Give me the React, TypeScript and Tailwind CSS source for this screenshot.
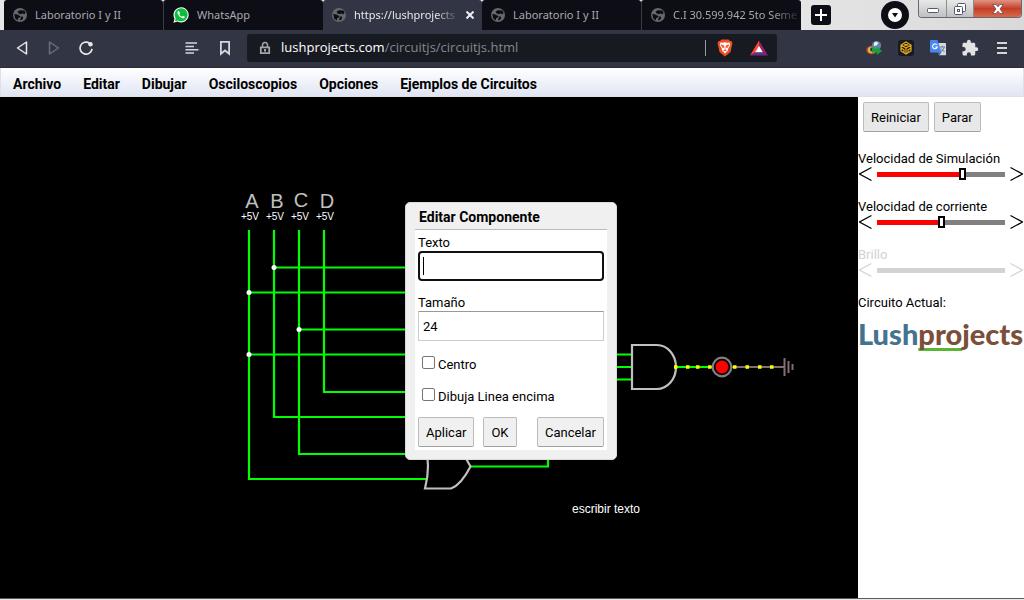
import { useState, type ReactNode } from "react";

const tabs = [
  { title: "Laboratorio I y II", kind: "globe" },
  { title: "WhatsApp", kind: "whatsapp" },
  { title: "https://lushprojects", kind: "globe", active: true },
  { title: "Laboratorio I y II", kind: "globe" },
  { title: "C.I 30.599.942 5to Seme", kind: "globe", faded: true },
];

const menus = ["Archivo", "Editar", "Dibujar", "Osciloscopios", "Opciones", "Ejemplos de Circuitos"];

function Globe() {
  return (
    <svg viewBox="0 0 14 14" className="size-3.5 shrink-0" aria-hidden="true">
      <circle cx="7" cy="7" r="7" fill="#67686d" />
      <path d="M7 2.2 11.6 2.6 12.6 5 11 6.4 9.6 5.2 8.2 6.2 5.6 5.4 4.6 3.6ZM1.2 6 4.4 6.6 7.6 8.2 6.8 9.6 5.2 10 4.8 12.6 2.2 10.6Z" fill="#0c0d15" />
      <path d="M8 8.6 10.2 8.8 9.6 11.4 7 12.4Z" fill="#0c0d15" />
    </svg>
  );
}

function WhatsApp() {
  return (
    <svg viewBox="0 0 16 16" className="size-4 shrink-0" aria-hidden="true">
      <path d="M.4 15.7 1.5 11.7A7.6 7.6 0 1 1 4.5 14.6Z" fill="#fff" />
      <path d="M1.9 14.2 2.7 11.4A6.5 6.5 0 1 1 4.8 13.4Z" fill="#0bbf3d" />
      <path d="M5.4 4.1c-.9.5-1.2 1.5-.8 2.5.9 2.3 2.7 4 5 4.7 1.1.3 2.2-.4 2.2-1.6l-1.9-1-.9 1c-1.2-.5-2.2-1.4-2.700-2.500l.7-.9-.8-2Z" fill="#fff" />
    </svg>
  );
}

function IconButton({ label, children, className = "" }: { label: string; children: ReactNode; className?: string }) {
  return (
    <button type="button" aria-label={label} className={`flex size-4 shrink-0 items-center justify-center ${className}`}>
      {children}
    </button>
  );
}

function TabStrip() {
  return (
    <div className="flex h-[30px] shrink-0 bg-linear-to-r from-[#e6e7e9] via-[#f4f4f4] to-[#d9d9da] pl-1">
      <div className="flex min-w-0 flex-[0_1_797px]" role="tablist">
        {tabs.map((t, i) => (
          <div
            key={i}
            className={`flex min-w-0 flex-1 items-center rounded-t-[3px] pl-[9px] ${
              t.active ? "bg-[#323544] text-[#e6e6e9]" : "bg-[#0c0d15] text-[#a9a9ae]"
            } ${i === 1 || i === 4 ? "border-l border-[#3c3d42]" : ""}`}
          >
            {t.kind === "globe" ? <Globe /> : <WhatsApp />}
            <button
              type="button"
              role="tab"
              aria-selected={!!t.active}
              className={`ml-2 text-left font-['Noto_Sans',sans-serif] text-[11px] leading-4 whitespace-nowrap ${
                t.active ? "mr-2.5 flex-1" : ""
              } ${t.active || t.faded ? "[mask-image:linear-gradient(to_right,black_80%,rgba(0,0,0,0.15))]" : ""}`}
            >
              {t.title}
            </button>
            {t.active && (
              <button type="button" aria-label="Cerrar" className="mr-2 shrink-0">
                <svg viewBox="0 0 8 8" className="size-2" stroke="#f0f0f2" strokeWidth="2" aria-hidden="true">
                  <path d="M.5.5 7.5 7.5M7.5.5.5 7.5" />
                </svg>
              </button>
            )}
          </div>
        ))}
      </div>
      <button type="button" aria-label="Nueva pestaña" className="mt-[5px] ml-2.5 flex size-5 shrink-0 items-center justify-center rounded-[3px] bg-[#0c0d15]">
        <svg viewBox="0 0 12 12" className="size-3" stroke="#fff" strokeWidth="2" aria-hidden="true">
          <path d="M6 0V12M0 6H12" />
        </svg>
      </button>
      <div className="flex-1" />
      <button type="button" aria-label="Buscar pestañas" className="mt-px mr-[9px] flex size-7 shrink-0 items-center justify-center rounded-full bg-[#0c0d15]">
        <svg viewBox="0 0 14 14" className="size-3.5" aria-hidden="true">
          <circle cx="7" cy="7" r="7" fill="#fff" />
          <path d="M4 5H10L7 9.5Z" fill="#0c0d15" />
        </svg>
      </button>
      <div className="mr-0.5 flex h-[18px] shrink-0 overflow-hidden rounded-b-[4px] border border-t-0 border-[#66686c]">
        <button type="button" aria-label="Minimizar" className="flex w-7 items-center justify-center border-r border-[#8b8d90] bg-linear-to-b from-[#e9e9e9] to-[#bfc0c2] pt-1">
          <svg viewBox="0 0 12 5" className="h-[5px] w-3" aria-hidden="true">
            <rect x=".5" y=".5" width="11" height="4" rx="1" fill="#fff" stroke="#55576a" />
          </svg>
        </button>
        <button type="button" aria-label="Restaurar" className="flex w-[27px] items-center justify-center border-r border-[#8b8d90] bg-linear-to-b from-[#e9e9e9] to-[#bfc0c2]">
          <svg viewBox="0 0 12 12" className="size-3" fill="#fff" stroke="#55576a" aria-hidden="true">
            <rect x="3.5" y=".5" width="8" height="8" rx="1" />
            <rect x=".5" y="3.5" width="8" height="8" rx="1" />
            <rect x="3.5" y="6.5" width="2" height="2" />
          </svg>
        </button>
        <button type="button" aria-label="Cerrar ventana" className="flex w-[47px] items-center justify-center bg-linear-to-b from-[#dd9382] via-[#c63d25] to-[#d66a4c]">
          <svg viewBox="0 0 12 10" className="h-2.5 w-3" aria-hidden="true">
            <path d="M.7.5H4L6 2.8 8 .5H11.3L8 5 11.3 9.5H8L6 7.2 4 9.5H.7L4 5Z" fill="#fff" stroke="#6b4a55" strokeWidth=".8" />
          </svg>
        </button>
      </div>
    </div>
  );
}

function BrowserBar() {
  return (
    <div className="flex h-[38px] shrink-0 items-center border-b border-[#292b37] bg-[#323544] px-3.5 pb-px">
      <IconButton label="Atrás">
        <svg viewBox="0 0 16 16" className="size-4" fill="none" stroke="#e9e9ec" strokeWidth="1.5" strokeLinejoin="round">
          <path d="M12.5 2V14L3.5 8Z" />
        </svg>
      </IconButton>
      <IconButton label="Adelante" className="ml-4">
        <svg viewBox="0 0 16 16" className="size-4" fill="none" stroke="#6c6e79" strokeWidth="1.5" strokeLinejoin="round">
          <path d="M3.5 2V14L12.5 8Z" />
        </svg>
      </IconButton>
      <IconButton label="Recargar" className="ml-4">
        <svg viewBox="0 0 16 16" className="size-4" fill="none" stroke="#e9e9ec" strokeWidth="1.7">
          <path d="M11.5 3.2A6 6 0 1 0 14 8.800" />
          <circle cx="12.500" cy="4.300" r="2.200" fill="#e9e9ec" stroke="none" />
        </svg>
      </IconButton>
      <IconButton label="Lista de lectura" className="ml-[90px]">
        <svg viewBox="0 0 16 16" className="size-4" stroke="#d5d6da" strokeWidth="1.5">
          <path d="M1.5 3H13M1.5 6.5H10M1.5 9.8H14.5M1.5 13H10" />
        </svg>
      </IconButton>
      <IconButton label="Guardar en marcadores" className="ml-[17px]">
        <svg viewBox="0 0 16 16" className="size-4" fill="none" stroke="#d5d6da" strokeWidth="1.8">
          <path d="M3.9 1.9H12.1V13.8L8 10.5 3.9 13.8Z" />
        </svg>
      </IconButton>
      <div className="ml-3.5 flex h-7 min-w-0 flex-[0_1_530px] items-center rounded-[3px] bg-[#181a22] pl-3">
        <svg viewBox="0 0 12 14" className="mr-2.5 h-3.5 w-3 shrink-0" aria-hidden="true">
          <path d="M3.5 6V4.2A2.5 2.8 0 0 1 8.5 4.2V6" fill="none" stroke="#a3a4a8" strokeWidth="1.5" />
          <path d="M1.8 6.3H10.2V12.2H1.8Z" fill="none" stroke="#a3a4a8" strokeWidth="1.8" />
          <rect x="5" y="8" width="2" height="2.6" fill="#a3a4a8" />
        </svg>
        <a href="#circuit" className="min-w-0 flex-1 truncate font-['Open_Sans',sans-serif] text-[13px] text-[#86888e]">
          <span className="text-white">lushprojects.com</span>/circuitjs/circuitjs.html
        </a>
        <span className="h-4 w-px bg-[#9a9ba0]" />
        <button type="button" aria-label="Brave Shields" className="ml-[11px] shrink-0">
          <svg viewBox="0 0 16 18" className="h-[18px] w-4">
            <path d="M4.5.5H11.5L13 2 14.5 1.9 15.5 4.5 15 6 13.5 13 8 17.5 2.5 13 1 6 .5 4.5 1.5 1.9 3 2Z" fill="#f04e23" />
            <path d="M3.5 3.5 6 3.8 8 3.2 10 3.8 12.5 3.5 13.3 6 11.2 9.5 11 11.5 8 14.5 5 11.5 4.8 9.5 2.7 6Z" fill="#fff" />
            <path d="M4 5.8 7 6.8 6.2 9ZM12 5.8 9 6.8 9.8 9ZM8 7.5V10.5M6.3 12 8 10.7 9.7 12" fill="#f04e23" stroke="#f04e23" strokeWidth=".7" />
          </svg>
        </button>
        <button type="button" aria-label="Brave Rewards" className="mr-[9px] ml-[17px] shrink-0">
          <svg viewBox="0 0 18 16" className="h-4 w-[18px]">
            <path d="M9 .5 0 15.5 5.5 12.5 9 6Z" fill="#ff4724" />
            <path d="M9 .5 18 15.5 12.5 12.5 9 6Z" fill="#9e1f63" />
            <path d="M0 15.5H18L12.7 12.3H5.3Z" fill="#662d91" />
            <path d="M9 5.7 12.8 12.3H5.2Z" fill="#fff" />
          </svg>
        </button>
      </div>
      <div className="flex-1" />
      <IconButton label="Gestor de descargas">
        <svg viewBox="0 0 16 16" className="size-4">
          <ellipse cx="5.5" cy="10" rx="5.2" ry="4.200" fill="#c84b32" />
          <ellipse cx="6" cy="10" rx="4" ry="3.300" fill="#d8c72e" />
          <ellipse cx="6.500" cy="9.500" rx="2.500" ry="2.200" fill="#283b53" />
          <circle cx="10.5" cy="5.5" r="4.600" fill="#5f86b0" />
          <path d="M8 3 10 1.5 12.500 3 10.500 5.500 8 6Z" fill="#eef2e4" />
          <path d="M6 8 11 9 11 7 16 11 11 15 10.5 12 6 13Z" fill="#15a238" />
        </svg>
      </IconButton>
      <IconButton label="Billetera" className="ml-4 rounded-[3px] bg-[#181a22]">
        <svg viewBox="0 0 16 16" className="size-4" fill="none" stroke="#e5ac18" strokeWidth="1.2">
          <path d="M8 2 13 5V11L8 14 3 11V5ZM3 5 8 8 13 5M8 8V14M5.5 3.5 10.5 6.5M10.5 3.5 5.5 6.5M3 8 6 9.8V12.5M13 8 10 9.8V12.5" />
        </svg>
      </IconButton>
      <IconButton label="Traductor" className="ml-4">
        <svg viewBox="0 0 16 16" className="size-4">
          <path d="M6 3H15.2Q16 3 16 4V15.2H9Z" fill="#d5d8dd" />
          <path d="M10 7H15M12.5 5.8V7M14.3 7.2Q13.5 10 10.5 12M11 8.5 14.5 12" fill="none" stroke="#68798b" />
          <path d="M0 1Q0 0 1 0H7.5L11.5 12.5H1Q0 12.500 0 11.5Z" fill="#4688f0" />
          <path d="M7 5A2.4 2.4 0 1 0 7.3 7H5.2" fill="none" stroke="#fff" strokeWidth="1.1" />
          <path d="M7.5 12.5H11.5L9 15.5Z" fill="#2f5fbf" />
        </svg>
      </IconButton>
      <IconButton label="Extensiones" className="ml-4">
        <svg viewBox="0 0 24 24" className="size-[18px] shrink-0" fill="#e3e3e6">
          <path d="M20.5 11H19V7c0-1.100-.9-2-2-2h-4V3.5a2.5 2.5 0 0 0-5 0V5H4c-1.100 0-2 .9-2 2v3.8h1.5a2.7 2.7 0 0 1 0 5.4H2V20c0 1.100.9 2 2 2h3.8v-1.5a2.7 2.7 0 0 1 5.4 0V22H17c1.100 0 2-.9 2-2v-4h1.5a2.5 2.5 0 0 0 0-5Z" />
        </svg>
      </IconButton>
      <IconButton label="Menú" className="ml-4">
        <svg viewBox="0 0 16 16" className="size-4" stroke="#d5d6da" strokeWidth="1.8">
          <path d="M3 3H13M3 8H13M3 13H13" />
        </svg>
      </IconButton>
    </div>
  );
}

function Circuit() {
  return (
    <svg width="858" height="501" viewBox="0 97 858 501" className="shrink-0" fill="none" aria-label="Circuito">
      <g stroke="#00ff00" strokeWidth="2.2">
        <path d="M249 230V479H427M274 230V417H425M299 230V454H430M324 230V392H425" />
        <path d="M274 267.5H425M249 292.5H425M299 329.5H425M249 354.5H425" />
        <path d="M470 466.5H548V440M600 354.5H632M600 367H632M600 379.5H632M676 367H712" />
      </g>
      <g fill="#fff">
        <circle cx="274" cy="267.5" r="2.5" />
        <circle cx="249" cy="292.5" r="2.5" />
        <circle cx="299" cy="329.5" r="2.5" />
        <circle cx="249" cy="354.5" r="2.5" />
      </g>
      <g stroke="#c0c0c0" strokeWidth="2.2">
        <path d="M425 444Q431 466 425 488.5H451Q461 485 470.5 466.5Q461 448 451 444Z" />
        <path d="M632 345H657A19 22 0 0 1 657 389H632Z" />
      </g>
      <path d="M732 367H784" stroke="#807070" strokeWidth="2" />
      <path d="M784.5 358V376M788.5 361V373M792.5 364V370" stroke="#807070" strokeWidth="2" />
      <circle cx="722" cy="367" r="9.3" stroke="#808080" strokeWidth="2.2" />
      <circle cx="722" cy="367" r="6.5" fill="#f00" />
      <path
        d="M674 367h3.5M686 367h3.5M696 367h3.5M708 367h3.5M733 367h3.5M745.5 367h3.5M758 367h3.5M770 367h3.5"
        stroke="#ffff00"
        strokeWidth="3.5"
      />
      <g fill="#c0c0c0" textAnchor="middle" className="font-['Liberation_Sans',sans-serif] text-[20px]">
        <text x="252" y="208">A</text>
        <text x="277" y="208">B</text>
        <text x="301" y="207">C</text>
        <text x="327" y="208">D</text>
      </g>
      <g fill="#fff" textAnchor="middle" className="font-['Liberation_Sans',sans-serif] text-[10px]">
        <text x="250" y="220">+5V</text>
        <text x="275" y="220">+5V</text>
        <text x="300" y="220">+5V</text>
        <text x="325" y="220">+5V</text>
      </g>
      <text x="572" y="513" fill="#fff" className="font-['Liberation_Sans',sans-serif] text-[12px]">
        escribir texto
      </text>
    </svg>
  );
}

function Arrow({ right, label, onClick, disabled }: { right?: boolean; label: string; onClick: () => void; disabled?: boolean }) {
  return (
    <button type="button" aria-label={label} onClick={onClick} disabled={disabled} className="shrink-0">
      <svg viewBox="0 0 13 14" className="h-3.5 w-[13px]" fill="none" stroke="currentColor" strokeWidth="1.2">
        <path d={right ? "M.5.5 12.5 7 .5 13.5" : "M12.5.5.5 7 12.5 13.5"} />
      </svg>
    </button>
  );
}

function Slider({ id, label, initial, disabled }: { id: string; label: string; initial: number; disabled?: boolean }) {
  const [value, setValue] = useState(initial);
  const fill = disabled
    ? "linear-gradient(#d3d3d3,#d3d3d3)"
    : `linear-gradient(to right,#ff0000 ${value}%,#808080 ${value}%)`;
  return (
    <div className={`mb-4 ${disabled ? "text-[#d3d3d3]" : "text-black"}`}>
      <label htmlFor={id} className="block h-4 leading-[18px] whitespace-nowrap">
        {label}
      </label>
      <div className="flex h-4 items-center gap-[5px] px-px">
        <Arrow label="Menos" disabled={disabled} onClick={() => setValue((v) => Math.max(0, v - 1))} />
        <input
          id={id}
          type="range"
          min={0}
          max={100}
          value={value}
          disabled={disabled}
          onChange={(e) => setValue(Number(e.target.value))}
          style={{ backgroundImage: fill }}
          className={`h-3 min-w-0 flex-1 appearance-none bg-[length:100%_5px] bg-center bg-no-repeat [&::-webkit-slider-thumb]:h-3 [&::-webkit-slider-thumb]:w-[7px] [&::-webkit-slider-thumb]:appearance-none ${
            disabled
              ? "[&::-webkit-slider-thumb]:opacity-0"
              : "[&::-webkit-slider-thumb]:border-2 [&::-webkit-slider-thumb]:border-black [&::-webkit-slider-thumb]:bg-white"
          }`}
        />
        <Arrow right label="Más" disabled={disabled} onClick={() => setValue((v) => Math.min(100, v + 1))} />
      </div>
    </div>
  );
}

function PushButton({ children, className = "" }: { children: ReactNode; className?: string }) {
  return (
    <button
      type="button"
      className={`h-[30px] rounded-[2px] border border-[#bbbbbb] border-b-[#a0a0a0] px-[7px] pt-px whitespace-nowrap ${className}`}
    >
      {children}
    </button>
  );
}

function Sidebar() {
  return (
    <aside className="w-[166px] shrink-0 bg-white">
      <div className="mb-[18px] flex gap-[5px] pt-[5px] pl-[5px]">
        <PushButton className="bg-[#e8e8e8]">Reiniciar</PushButton>
        <PushButton className="bg-[#e8e8e8]">Parar</PushButton>
      </div>
      <Slider id="speed" label="Velocidad de Simulación" initial={68} />
      <Slider id="current" label="Velocidad de corriente" initial={50} />
      <Slider id="power" label="Brillo" initial={50} disabled />
      <p className="leading-[18px]">Circuito Actual:</p>
      <a href="#home" className="mt-1.5 block font-['Lato',sans-serif] text-[29px] leading-8 font-black whitespace-nowrap text-[#7b4f3a]">
        <span className="text-[#44728f]">Lush</span>
        <span className="underline decoration-[#5bb531] decoration-[3px] underline-offset-[3px] [text-decoration-skip-ink:none]">pro</span>jects
      </a>
    </aside>
  );
}

function EditDialog() {
  const [text, setText] = useState("");
  const [size, setSize] = useState("24");
  return (
    <div
      role="dialog"
      aria-labelledby="dialog-title"
      className="w-[212px] rounded-[5px] border border-[#dcdcdc] bg-[#f0f0f0] px-[9px] pb-[9px]"
    >
      <h2 id="dialog-title" className="h-[27px] border-b border-[#bbbbbb] pl-1 text-sm leading-7 font-bold">
        Editar Componente
      </h2>
      <form className="bg-white px-[3px] pt-1 pb-[3px]" onSubmit={(e) => e.preventDefault()}>
        <label htmlFor="text" className="block leading-[17px]">Texto</label>
        <div className="relative">
          <input
            id="text"
            value={text}
            onChange={(e) => setText(e.target.value)}
            className="block h-[30px] w-full rounded-[4px] border-2 border-[#101010] bg-white px-[3px] caret-transparent outline-none"
          />
          {text === "" && <span className="pointer-events-none absolute top-1.5 left-[5px] h-[18px] w-px bg-black" />}
        </div>
        <label htmlFor="size" className="mt-[13px] block leading-[17px]">Tamaño</label>
        <input
          id="size"
          value={size}
          onChange={(e) => setSize(e.target.value)}
          className="block h-[30px] w-full border border-[#cccccc] border-t-[#999999] bg-white px-1 outline-none"
        />
        <label className="mt-3.5 flex h-[18px] items-end gap-[3px] pl-1 leading-4">
          <input type="checkbox" className="mb-1 size-[13px] appearance-none rounded-[2px] border border-[#767676] bg-white checked:bg-[#0075ff]" />
          Centro
        </label>
        <label className="mt-3.5 flex h-[18px] items-end gap-[3px] pl-1 leading-4">
          <input type="checkbox" className="mb-1 size-[13px] appearance-none rounded-[2px] border border-[#767676] bg-white checked:bg-[#0075ff]" />
          Dibuja Linea encima
        </label>
        <div className="mt-3 flex">
          <PushButton className="bg-[#f0f0f0]">Aplicar</PushButton>
          <PushButton className="ml-[9px] bg-[#f0f0f0]">OK</PushButton>
          <PushButton className="ml-auto bg-[#f0f0f0]">Cancelar</PushButton>
        </div>
      </form>
    </div>
  );
}

export default function App() {
  return (
    <div className="flex h-screen flex-col overflow-hidden bg-white font-['Roboto',sans-serif] text-[13px] text-black">
      <TabStrip />
      <BrowserBar />
      <div className="relative flex min-h-0 flex-1 flex-col">
        <nav className="flex h-[29px] shrink-0 items-center gap-[22px] border border-t-0 border-[#e0e0e0] bg-linear-to-b from-white to-[#e0e5f2] pt-1 pl-3 text-sm font-bold">
          {menus.map((m) => (
            <button key={m} type="button" className="whitespace-nowrap">
              {m}
            </button>
          ))}
        </nav>
        <div className="flex min-h-0 flex-1">
          <main id="circuit" className="min-w-0 flex-1 overflow-hidden bg-black">
            <Circuit />
          </main>
          <Sidebar />
        </div>
        <div className="pointer-events-none absolute inset-0 flex items-center justify-center pr-0.5 pb-1">
          <div className="pointer-events-auto">
            <EditDialog />
          </div>
        </div>
      </div>
      <footer className="h-0.5 shrink-0 border-t border-[#5c5c5c] bg-[#e8e8e8]" />
    </div>
  );
}
